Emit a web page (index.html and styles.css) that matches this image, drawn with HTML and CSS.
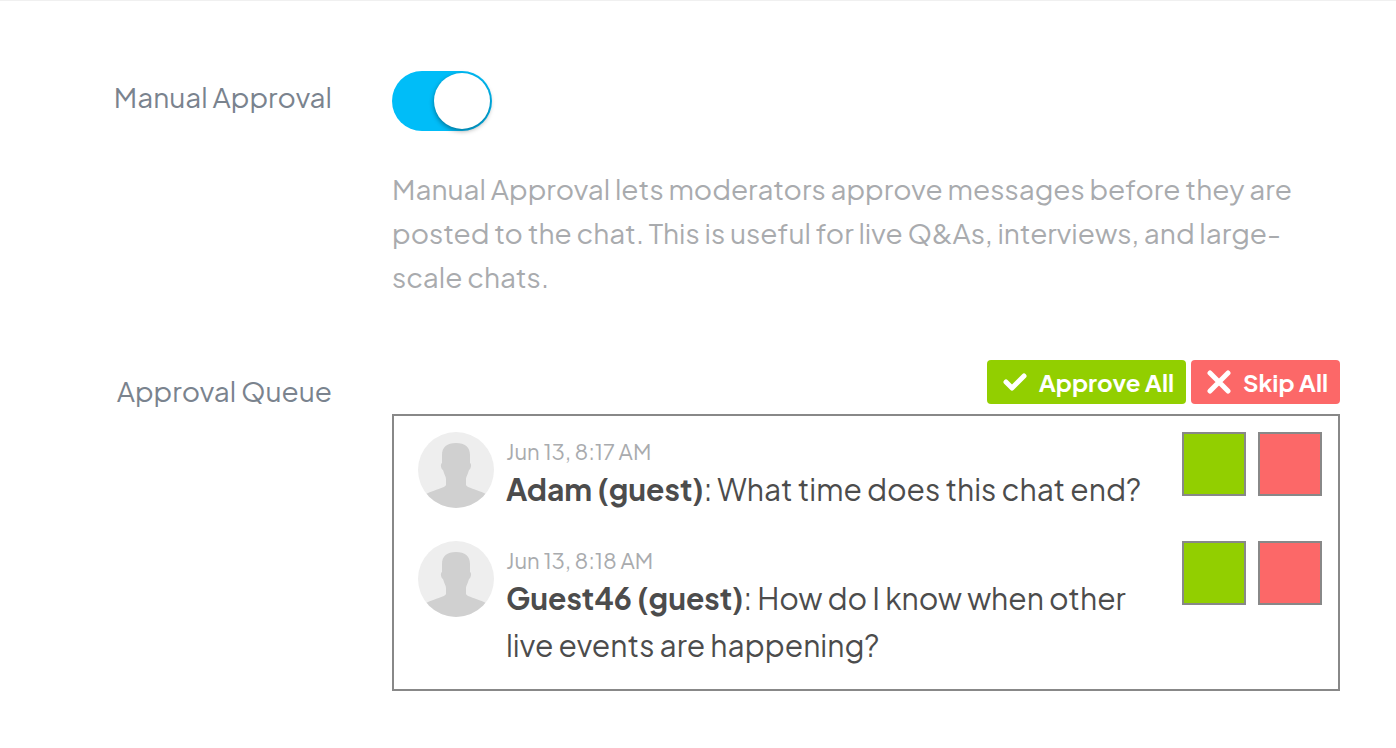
FILE: index.html
```html
<!DOCTYPE html>
<html lang="en">
<head>
    <meta charset="UTF-8">
    <meta name="viewport" content="width=device-width, initial-scale=1.0">
    <title>Moderation</title>
    <link rel="stylesheet" href="styles.css">
</head>
<body>

    <svg class="sprite" aria-hidden="true">
        <symbol id="person" viewBox="0 0 76 76">
            <path d="M38 11C29 11 24 15 24 23V31C22 32 23 37 25 38C26 42 28 45 28 47V53C27 56 18 57 8 62L4 65V76H72V65L68 62C58 57 49 56 48 53V47C48 45 50 42 51 38C53 37 54 32 52 31V23C52 15 47 11 38 11Z"/>
        </symbol>
    </svg>

    <main class="settings">
        <div class="setting">
            <label class="setting-label" for="manual-approval">Manual Approval</label>
            <div class="setting-body">
                <input class="toggle" type="checkbox" role="switch" id="manual-approval" aria-describedby="approval-help" checked>
                <p class="help" id="approval-help">Manual Approval lets moderators approve messages before they are posted to the chat. This is useful for live Q&amp;As, interviews, and large-scale chats.</p>
            </div>
        </div>

        <div class="setting">
            <h2 class="setting-label queue-label" id="queue-label">Approval Queue</h2>
            <div class="setting-body">
                <div class="queue-actions">
                    <button class="btn btn-green" type="button">
                        <svg class="icon" viewBox="0 0 24 24"><path d="M3 12L9 18L21 6" stroke-linecap="round" stroke-linejoin="round"/></svg>
                        Approve All
                    </button>
                    <button class="btn btn-red" type="button">
                        <svg class="icon" viewBox="0 0 24 24"><path d="M3 3L21 21M21 3L3 21" stroke-linecap="round"/></svg>
                        Skip All
                    </button>
                </div>

                <ul class="queue" aria-labelledby="queue-label">
                    <li class="message">
                        <svg class="avatar" aria-hidden="true"><use href="#person"/></svg>
                        <div class="message-body">
                            <time class="time">Jun 13, 8:17 AM</time>
                            <p class="text"><strong>Adam (guest)</strong>: What time does this chat end?</p>
                        </div>
                        <div class="message-actions">
                            <button class="square btn-green" type="button" aria-label="Approve"></button>
                            <button class="square btn-red" type="button" aria-label="Skip"></button>
                        </div>
                    </li>
                    <li class="message">
                        <svg class="avatar" aria-hidden="true"><use href="#person"/></svg>
                        <div class="message-body">
                            <time class="time">Jun 13, 8:18 AM</time>
                            <p class="text"><strong>Guest46 (guest)</strong>: How do I know when other live events are happening?</p>
                        </div>
                        <div class="message-actions">
                            <button class="square btn-green" type="button" aria-label="Approve"></button>
                            <button class="square btn-red" type="button" aria-label="Skip"></button>
                        </div>
                    </li>
                </ul>
            </div>
        </div>
    </main>

</body>
</html>
```

FILE: styles.css
```css
:root {
    --green: #92cf00;
    --red: #fc6868;
    --blue: #00bdf8;
    --border: #888;
    --label: #7a838e;
    --muted: #a9abae;
    --text: #4c4c4c;
}

* {
    box-sizing: border-box;
}

body {
    margin: 0;
    background: #fff;
    border-top: 1px solid #f0f0f0;
    font-family: "Plus Jakarta Sans", Lato, "Open Sans", sans-serif;
    color: var(--text);
}

.sprite {
    display: none;
}

.settings {
    display: grid;
    gap: 61px;
    padding: 70px 56px 56px 0;
}

/* Label column on the left, control on the right */
.setting {
    display: grid;
    grid-template-columns: 332px 1fr;
    column-gap: 60px;
}

.setting-label {
    margin: 0;
    padding-top: 4px;
    font-size: 28px;
    font-weight: 400;
    line-height: 44px;
    text-align: right;
    color: var(--label);
}

.queue-label {
    padding-top: 9px;
}

/* Toggle */
.toggle {
    appearance: none;
    display: flex;
    justify-content: flex-end;
    width: 100px;
    height: 60px;
    margin: 0;
    padding: 2px;
    border-radius: 30px;
    background: var(--blue);
    cursor: pointer;
}

.toggle::before {
    content: "";
    width: 56px;
    height: 56px;
    border-radius: 50%;
    background: #fff;
    box-shadow: 0 2px 5px rgba(0, 0, 0, 0.4);
}

.toggle:not(:checked) {
    justify-content: flex-start;
    background: #ccc;
}

.help {
    margin: 36px 0 0;
    font-size: 28px;
    line-height: 44px;
    color: var(--muted);
}

/* Buttons */
.queue-actions {
    display: flex;
    justify-content: flex-end;
    gap: 5px;
    margin-bottom: 10px;
}

.btn {
    display: flex;
    align-items: center;
    gap: 12px;
    height: 44px;
    padding: 0 12px 0 16px;
    border: none;
    border-radius: 4px;
    font: 700 24px/44px "Plus Jakarta Sans", Lato, "Open Sans", sans-serif;
    color: #fff;
    cursor: pointer;
}

.btn-green { background-color: var(--green); }
.btn-red { background-color: var(--red); }

.icon {
    width: 24px;
    height: 24px;
    fill: none;
    stroke: #fff;
    stroke-width: 5;
}

/* Queue */
.queue {
    display: grid;
    gap: 28px;
    margin: 0;
    padding: 16px 16px 20px 24px;
    border: 2px solid var(--border);
    list-style: none;
}

.message {
    display: grid;
    grid-template-columns: 76px 1fr auto;
    column-gap: 12px;
    align-items: start;
}

.avatar {
    width: 76px;
    height: 76px;
    border-radius: 50%;
    background: #eee;
    fill: #d0d0d0;
}

.message-body {
    padding-top: 4px;
}

.time {
    display: block;
    font-size: 22px;
    line-height: 30px;
    color: var(--muted);
}

.text {
    margin: 0;
    font-size: 30px;
    line-height: 47px;
}

.message-actions {
    display: flex;
    gap: 12px;
}

.square {
    width: 64px;
    height: 64px;
    padding: 0;
    border: 2px solid var(--border);
    cursor: pointer;
}
```
